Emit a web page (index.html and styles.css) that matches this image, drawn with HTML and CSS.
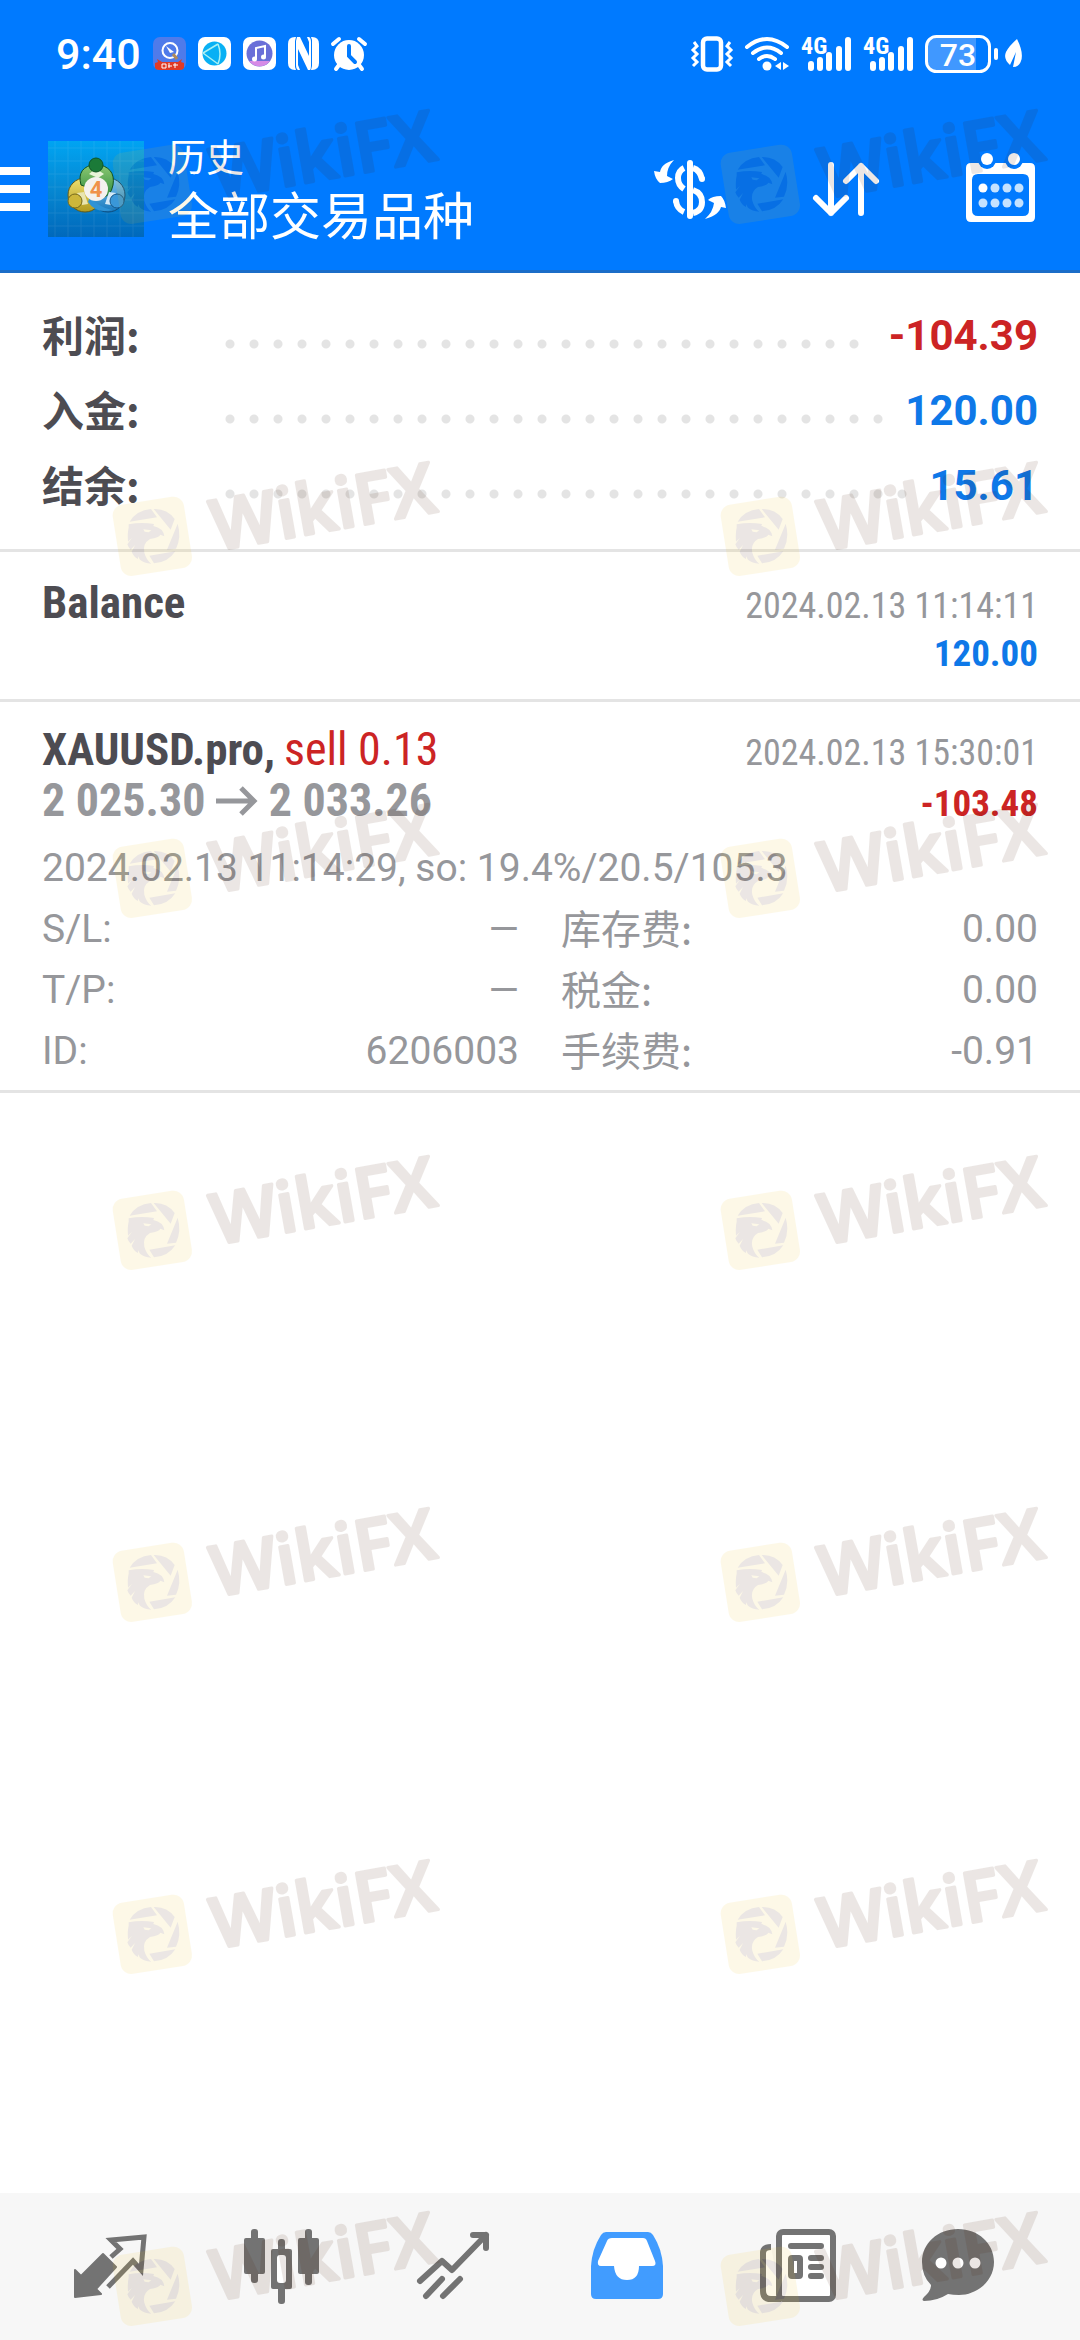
FILE: index.html
```html
<!DOCTYPE html>
<html lang="zh-CN">
<head>
  <meta charset="UTF-8" />
  <meta name="viewport" content="width=device-width, initial-scale=1.0"/>
  <title>历史</title>
  <link rel="stylesheet" href="styles.css">
</head>
<body>

<header>
  <div class="status-bar">
    <div class="status-left">
      <span class="clock">9:40</span>
      <svg width="33" height="33" viewBox="0 0 33 33">
        <rect width="33" height="33" rx="7" fill="#4f7bea"/>
        <circle cx="17" cy="13.500" r="7.500" fill="none" stroke="#fff" stroke-width="2"/>
        <path d="M13 9l8 6-4 1z" fill="#fff"/>
        <path d="M20 17l4 5" stroke="#b08a5a" stroke-width="3"/>
        <path d="M2 26l3-1-1-3 5 3h16l4-3-1 3 3 1v5q-1 2-4 2H6q-3 0-4-2z" fill="#e03a26"/>
        <path d="M9 27h4v4H9zM16 26v5M15 29h4M22 26v5M20 28h5" stroke="#fff" fill="none"/>
      </svg>
      <svg width="33" height="33" viewBox="0 0 33 33">
        <rect width="33" height="33" rx="7" fill="#fff"/>
        <circle cx="16.500" cy="16.500" r="12" fill="#08b0f4"/>
        <path d="M5 16l15-9M5 16l15 11M20 7q4 10 0 20" stroke="#a8f0f4" fill="none" stroke-width="1.500"/>
      </svg>
      <svg width="33" height="33" viewBox="0 0 33 33">
        <rect width="33" height="33" rx="7" fill="#fff"/>
        <circle cx="16.500" cy="16.500" r="13" fill="#6a6fd8"/>
        <path d="M6 24a13 13 0 0 0 21 0" fill="#d68be6"/>
        <path d="M13 22V11l9-2v11" stroke="#fff" stroke-width="2" fill="none"/>
        <circle cx="11.500" cy="22" r="2.500" fill="#fff"/><circle cx="20.500" cy="20" r="2.500" fill="#fff"/>
      </svg>
      <svg width="31" height="33" viewBox="0 0 31 33">
        <path d="M8 0H7Q0 0 0 7v19q0 7 7 7h1l-1-3V4z" fill="#fff"/>
        <path d="M23 33h1q7 0 7-7V7q0-7-7-7h-1l1 3v26z" fill="#fff"/>
        <path d="M9 0h3l9 19V5l-2-5h2q2 1 2 5v24q0 3-1 4h-2L10 12v16l2 5h-2q-2-1-2-5V4z" fill="#fff"/>
      </svg>
      <svg width="36" height="34" viewBox="0 0 36 34">
        <circle cx="18" cy="18" r="15" fill="#fff"/>
        <path d="M2 7l6-5M34 7l-6-5M8 28l-3 4M28 28l3 4" stroke="#fff" stroke-width="4" stroke-linecap="round"/>
        <path d="M18 9v10l6 6" stroke="#007aff" stroke-width="4" fill="none" stroke-linecap="round"/>
      </svg>
    </div>
    <div class="status-right">
      <svg width="42" height="36" viewBox="0 0 42 36" fill="none" stroke="#fff">
        <rect x="12" y="2.500" width="18" height="31" rx="4" stroke-width="4.500"/>
        <path d="M3 6l3 4-4 4 4 4-4 4 4 4-4 4M39 6l-3 4 4 4-4 4 4 4-4 4 4 4" stroke-width="3"/>
      </svg>
      <svg width="44" height="36" viewBox="0 0 44 36" fill="none" stroke="#fff" stroke-width="4" stroke-linecap="round">
        <path d="M2 11q20-16 40 0M8 17q14-11 28 0M14 23q8-6 16 0"/>
        <circle cx="22" cy="30" r="4.500" fill="#fff" stroke="none"/>
        <path d="M36 26v8l-6-4zM38 26v8l6-4z" fill="#fff" stroke="none"/>
      </svg>
      <svg width="50" height="36" viewBox="0 0 50 36" stroke="#fff" stroke-width="6" stroke-linecap="round">
        <text class="net" x="0" y="18">4G</text>
        <path d="M10 28v4M19 24v8M28 19v13M38 13v19M47 4v28"/>
      </svg>
      <svg width="50" height="36" viewBox="0 0 50 36" stroke="#fff" stroke-width="6" stroke-linecap="round">
        <text class="net" x="0" y="18">4G</text>
        <path d="M10 28v4M19 24v8M28 19v13M38 13v19M47 4v28"/>
      </svg>
      <svg width="98" height="38" viewBox="0 0 98 38">
        <path d="M11 3h40v32H11q-8 0-8-8V11q0-8 8-8z" fill="#4098ff"/>
        <rect x="1.500" y="1.500" width="63" height="35" rx="10" fill="none" stroke="#fff" stroke-width="3"/>
        <rect x="69" y="13" width="4" height="12" rx="2" fill="#fff"/>
        <text class="battery" x="33" y="31" text-anchor="middle">73</text>
        <path d="M92 4q7 14 4 22-2 6-8 6l3-15-6 13q-7-6-4-13 3-6 11-13z" fill="#fff"/>
      </svg>
    </div>
  </div>

  <div class="app-bar">
    <button class="menu-btn" aria-label="Menu">
      <svg width="30" height="44" viewBox="0 0 30 44" fill="#fff"><path d="M0 0h30v8H0zM0 18h30v8H0zM0 36h30v8H0z"/></svg>
    </button>
    <svg class="logo" width="96" height="96" viewBox="0 0 96 96">
      <defs>
        <linearGradient id="sky" x1="0" y1="0" x2="0" y2="1">
          <stop offset="0" stop-color="#00a4f2"/><stop offset="0.500" stop-color="#0688d2"/><stop offset="1" stop-color="#0068bb"/>
        </linearGradient>
        <linearGradient id="green" x1="0" y1="0" x2="0" y2="1"><stop offset="0" stop-color="#8fca74"/><stop offset="1" stop-color="#2c8a3c"/></linearGradient>
        <linearGradient id="gold" x1="0" y1="0" x2="0" y2="1"><stop offset="0" stop-color="#f0e070"/><stop offset="1" stop-color="#b09a20"/></linearGradient>
        <linearGradient id="aqua" x1="0" y1="0" x2="0" y2="1"><stop offset="0" stop-color="#7cc4ee"/><stop offset="1" stop-color="#1878bd"/></linearGradient>
      </defs>
      <rect width="96" height="96" fill="url(#sky)"/>
      <path d="M7 0v96M20 0v96M33 0v96M46 0v96M59 0v96M72 0v96M85 0v96M0 7h96M0 20h96M0 33h96M0 46h96M0 59h96M0 72h96M0 85h96" stroke="#fff" opacity="0.080"/>
      <!-- three figures round the centre -->
      <circle cx="37" cy="54" r="17" fill="url(#gold)" stroke="#5d5a1c"/>
      <circle cx="60" cy="54" r="17" fill="url(#aqua)" stroke="#0d4b7c"/>
      <path d="M33 44q-5-18 15-21 20 3 17 21-2 12-13 13l-8-9z" fill="url(#green)" stroke="#12521f"/>
      <path d="M41 33l5-4h4l6 4-6 4z" fill="#e8f4d8"/>
      <path d="M29 52l7-1 4 12-6 1z" fill="#e9e5b0"/>
      <path d="M68 52l-7-1-4 12 6 1z" fill="#d3e9f8"/>
      <path d="M42 56q8 10 22 13-16 4-24-8z" fill="#2f93d6"/>
      <circle cx="48" cy="24" r="7" fill="#1b7a38" stroke="#0f5524"/>
      <circle cx="27" cy="60" r="7" fill="#cdb63a" stroke="#76691c"/>
      <circle cx="69" cy="60" r="7" fill="#3a97d8" stroke="#15588c"/>
      <circle cx="48" cy="48" r="12" fill="#f4f1ee"/>
      <text class="four" x="48" y="56" text-anchor="middle">4</text>
    </svg>
    <div class="titles">
      <span class="sub">历史</span>
      <h1>全部交易品种</h1>
    </div>
    <div class="actions">
      <button aria-label="Currency">
        <svg width="72" height="72" viewBox="0 0 72 72">
          <path d="M20 7C10 10 7 14 6 19l-6-1q1 8 6 12 8 0 13-4l-6-3q0-9 7-16zM51 66c11-3 15-8 16-12l5 1q-1-8-5-12-9 0-13 4l6 3q-1 9-9 16z" fill="#fff"/>
          <path d="M36 10v53" stroke="#fff" stroke-width="6" stroke-linecap="round"/>
          <path d="M30 15q-6 3-6 10t6 11M22 48q1 8 8 11M39 15q7 2 9 11M39 37q9 3 9 12t-9 11" fill="none" stroke="#fff" stroke-width="6"/>
          <circle cx="48" cy="26" r="3" fill="#fff"/><circle cx="22" cy="48" r="3" fill="#fff"/>
        </svg>
      </button>
      <button aria-label="Sort">
        <svg width="72" height="72" viewBox="0 0 72 72" fill="none" stroke="#fff" stroke-width="6" stroke-linecap="round" stroke-linejoin="round">
          <path d="M21 12v48M6 45l15 15 15-15M51 60V13M36 28l15-15 15 15"/>
        </svg>
      </button>
      <button aria-label="Calendar">
        <svg width="72" height="72" viewBox="0 0 72 72">
          <path d="M5 10h59q5 0 5 5v49q0 5-5 5H5q-5 0-5-5V15q0-5 5-5zM12 21q-6 0-6 6v30q0 6 6 6h45q6 0 6-6V27q0-6-6-6z" fill="#fff" fill-rule="evenodd"/>
          <circle cx="21" cy="7" r="9" fill="#007aff"/><circle cx="48" cy="7" r="9" fill="#007aff"/>
          <circle cx="21" cy="6" r="6" fill="#fff"/><circle cx="48" cy="6" r="6" fill="#fff"/>
          <g fill="#c4e2ff">
            <circle cx="17" cy="35" r="4.500" fill="#fff"/><circle cx="29" cy="35" r="4.500"/><circle cx="41" cy="35" r="4.500"/><circle cx="53" cy="35" r="4.500"/>
            <circle cx="17" cy="50" r="4.500"/><circle cx="29" cy="50" r="4.500"/><circle cx="41" cy="50" r="4.500"/><circle cx="53" cy="50" r="4.500"/>
          </g>
        </svg>
      </button>
    </div>
  </div>
</header>

<main>
  <section class="summary">
    <div class="sum-row"><span class="sum-label cn">利润:</span><span class="dots"></span><span class="sum-value loss">-104.39</span></div>
    <div class="sum-row"><span class="sum-label cn">入金:</span><span class="dots"></span><span class="sum-value gain">120.00</span></div>
    <div class="sum-row"><span class="sum-label cn">结余:</span><span class="dots"></span><span class="sum-value gain">15.61</span></div>
  </section>

  <section class="deal balance">
    <div class="line"><span class="name">Balance</span><span class="time">2024.02.13 11:14:11</span></div>
    <div class="line end"><span class="amount gain">120.00</span></div>
  </section>

  <section class="deal">
    <div class="line">
      <span class="trade"><span class="name">XAUUSD.pro,</span> <span class="side">sell 0.13</span></span>
      <span class="time">2024.02.13 15:30:01</span>
    </div>
    <div class="line">
      <span class="prices">2 025.30
        <svg width="42" height="30" viewBox="0 0 42 30" fill="none" stroke="#96979b" stroke-width="5"><path d="M0 15h38M25 2l13 13-13 13"/></svg>
        2 033.26</span>
      <span class="amount loss">-103.48</span>
    </div>
    <p class="comment">2024.02.13 11:14:29, so: 19.4%/20.5/105.3</p>
    <dl class="details">
      <div><dt>S/L:</dt><dd>—</dd></div>
      <div><dt class="cn">库存费:</dt><dd>0.00</dd></div>
      <div><dt>T/P:</dt><dd>—</dd></div>
      <div><dt class="cn">税金:</dt><dd>0.00</dd></div>
      <div><dt>ID:</dt><dd>6206003</dd></div>
      <div><dt class="cn">手续费:</dt><dd>-0.91</dd></div>
    </dl>
  </section>
</main>

<nav>
  <button aria-label="Quotes">
    <svg width="76" height="76" viewBox="0 0 76 76">
      <path d="M3 41l6 6 22-22 13 13-20 22 5 5-26 3z" fill="#737373" stroke="#737373" stroke-width="2" stroke-linejoin="round"/>
      <path d="M39 28l9-8-9-9 33-3-3 33-8-9-25 26" fill="none" stroke="#737373" stroke-width="5"/>
    </svg>
  </button>
  <button aria-label="Charts">
    <svg width="76" height="76" viewBox="0 0 76 76" fill="#737373">
      <rect x="7" y="0" width="7" height="54" rx="3"/><rect x="0" y="9" width="21" height="36" rx="2"/>
      <rect x="34" y="10" width="7" height="65" rx="3"/><rect x="27" y="20" width="21" height="40" rx="2"/>
      <rect x="33" y="26" width="9" height="28" rx="3" fill="#fff"/>
      <rect x="61" y="0" width="7" height="56" rx="3"/><rect x="54" y="9" width="21" height="36" rx="2"/>
    </svg>
  </button>
  <button aria-label="Trade">
    <svg width="76" height="76" viewBox="0 0 76 76" fill="none" stroke="#737373" stroke-width="6" stroke-linecap="round" stroke-linejoin="round">
      <path d="M4 52l22-20 10 9L70 6M57 6h13v13M26 50L10 67M44 50L27 67"/>
    </svg>
  </button>
  <button aria-label="History">
    <svg width="76" height="76" viewBox="0 0 76 76">
      <path d="M18 3h42q3 0 5 3 9 14 10 31v28q0 5-5 5H8q-5 0-5-5V37Q4 20 13 6q2-3 5-3z" fill="#419cff"/>
      <path d="M24 9h31q3 0 4 3l8 20q2 5-3 5H51q0 14-12 14T26 37H13q-4 0-3-5l9-20q1-3 5-3z" fill="#fff"/>
    </svg>
  </button>
  <button aria-label="News">
    <svg width="76" height="76" viewBox="0 0 76 76" fill="none" stroke="#737373" stroke-width="6">
      <path d="M11 18q-8 0-8 6v38q0 8 8 8h10" fill="#fff"/>
      <rect x="19" y="3" width="54" height="67" rx="4" fill="#fff"/>
      <path d="M31 17h30M51 29h10M51 38h10M51 47h10" stroke-linecap="round"/>
      <rect x="31" y="29" width="9" height="18" rx="1"/>
    </svg>
  </button>
  <button aria-label="Messages">
    <svg width="76" height="76" viewBox="0 0 76 76">
      <path d="M38 0c20 0 36 14 36 33S57 66 39 66q-6 0-11-1-11 7-24 7-3-1 0-4 7-6 7-12-9-9-9-23C2 14 18 0 38 0z" fill="#737373"/>
      <g fill="#fff"><circle cx="21" cy="34" r="5.500"/><circle cx="38" cy="34" r="5.500"/><circle cx="55" cy="34" r="5.500"/></g>
    </svg>
  </button>
</nav>

<!-- watermark tile, repeated over the whole page -->
<svg class="defs" aria-hidden="true">
  <symbol id="wm" viewBox="0 0 1140 480" overflow="visible">
    <rect x="79" y="190" width="216" height="216" rx="32" transform="rotate(-9 187 298)" fill="#f0c41e"/>
    <g fill="#461900">
      <path d="M119 254q20-34 64-38l18 25zM191 216q40-2 63 30l-12 32zM263 260q12 40-5 75l-27 3zM178 356l78-13q-22 34-64 36z"/>
      <path d="M116 262q38-8 76-1l-2 6q30 6 33 31l-12-5q-4 9-31 13-23 14-17 41 6 22 21 33-22-2-34-12l-6-10v8q-14-8-19-22l10-20-13 14q-7-6-10-16l14-20-12 12q-2-28 2-42z"/>
    </g>
    <path d="M160 277l24 3-8 6-12-2z" fill="#f0c41e"/>
    <text class="wm-text" x="377" y="341" transform="rotate(-10 377 341)">WikiFX</text>
  </symbol>
</svg>
<div class="watermarks" aria-hidden="true">
  <svg><use href="#wm"/></svg><svg><use href="#wm"/></svg>
  <svg><use href="#wm"/></svg><svg><use href="#wm"/></svg>
  <svg><use href="#wm"/></svg><svg><use href="#wm"/></svg>
  <svg><use href="#wm"/></svg><svg><use href="#wm"/></svg>
  <svg><use href="#wm"/></svg><svg><use href="#wm"/></svg>
  <svg><use href="#wm"/></svg><svg><use href="#wm"/></svg>
  <svg><use href="#wm"/></svg><svg><use href="#wm"/></svg>
</div>

</body>
</html>
```
FILE: styles.css
```css
* { box-sizing: border-box; }
body { margin: 0; min-height: 100vh; display: flex; flex-direction: column; position: relative; background: #fff; color: #96979b; font-family: Roboto, "Noto Sans CJK SC", sans-serif; font-size: 39px; }
button { background: none; border: none; padding: 0; cursor: pointer; }
svg { display: block; overflow: visible; }
h1, p, dl, dd { margin: 0; font-weight: 400; }
.cn { font-family: "Noto Sans CJK SC", sans-serif; }

header { background: #007aff; color: #fff; border-bottom: 3px solid #1b6dc8; }
.status-bar { display: flex; justify-content: space-between; align-items: center; height: 107px; padding: 0 57px 0 56px; }
.status-left, .status-right { display: flex; align-items: center; gap: 12px; }
.clock { font-size: 43px; font-weight: 500; }
.net { font: 700 24px "Roboto Condensed", "Liberation Sans Narrow", Roboto, sans-serif; fill: #fff; stroke: none; }
.battery { font: 500 32px Roboto, sans-serif; fill: #fff; }
.four { font: 700 22px Roboto, sans-serif; fill: #f0924a; }

.app-bar { display: flex; align-items: center; height: 163px; padding-right: 42px; }
.logo { margin: 0 24px 0 18px; }
.titles { padding-top: 4px; }
.sub { display: block; font-size: 38px; line-height: 54px; }
.titles h1 { font-size: 51px; line-height: 66px; }
.actions { display: flex; gap: 84px; margin-left: auto; }

main { flex: 1; }
.gain { color: #0e78e8; }
.loss { color: #cc2424; }
.summary { padding: 25px 42px 26px; border-bottom: 3px solid #e4e4e4; }
.sum-row { display: flex; align-items: center; height: 75px; line-height: 75px; font-size: 42px; font-weight: 700; }
.sum-label { width: 176px; line-height: 71px; height: 75px; color: #4d4c52; }
.dots { flex: 1; height: 24px; margin: 16px 20px 0 0; background: radial-gradient(circle, #e4e4e4 4px, transparent 5px) 0 0 / 24px 24px; }

.deal { padding: 22px 42px 0; border-bottom: 3px solid #e4e4e4; }
.deal.balance { padding: 25px 42px 20px; }
.line { display: flex; justify-content: space-between; align-items: baseline; height: 51px; line-height: 51px; font-family: "Roboto Condensed", "Liberation Sans Narrow", Roboto, sans-serif; }
.line.end { justify-content: flex-end; }
.name { font-size: 45px; font-weight: 700; color: #4d4c52; }
.side { font-size: 46px; color: #cc2424; }
.time { font-size: 36px; }
.amount { font-size: 37px; font-weight: 700; }
.prices { font-size: 46px; font-weight: 700; }
.prices svg { display: inline-block; }

.comment { margin-top: 12px; line-height: 61px; }
.details { display: grid; grid-template-columns: 1fr 1fr; column-gap: 42px; padding-bottom: 8px; }
.details div { display: flex; justify-content: space-between; height: 61px; line-height: 61px; }
.details .cn { font-size: 40px; line-height: 56px; }

nav { display: grid; grid-template-columns: repeat(5, 172fr) 148fr; align-items: center; justify-items: center; height: 147px; padding: 0 48px 0 24px; background: #f7f7f7; }

.defs { position: absolute; width: 0; height: 0; }
.watermarks { position: absolute; top: 85px; left: 90px; right: 0; bottom: 0; overflow: hidden; display: grid; grid-template-columns: 608px 380px; grid-template-rows: 352px 342px repeat(5, 352px); opacity: 0.1; pointer-events: none; }
.watermarks svg { width: 380px; height: 160px; }
.wm-text { font: 600 210px "Open Sans", sans-serif; fill: #461900; stroke: #461900; stroke-width: 10px; stroke-linejoin: round; }
```
